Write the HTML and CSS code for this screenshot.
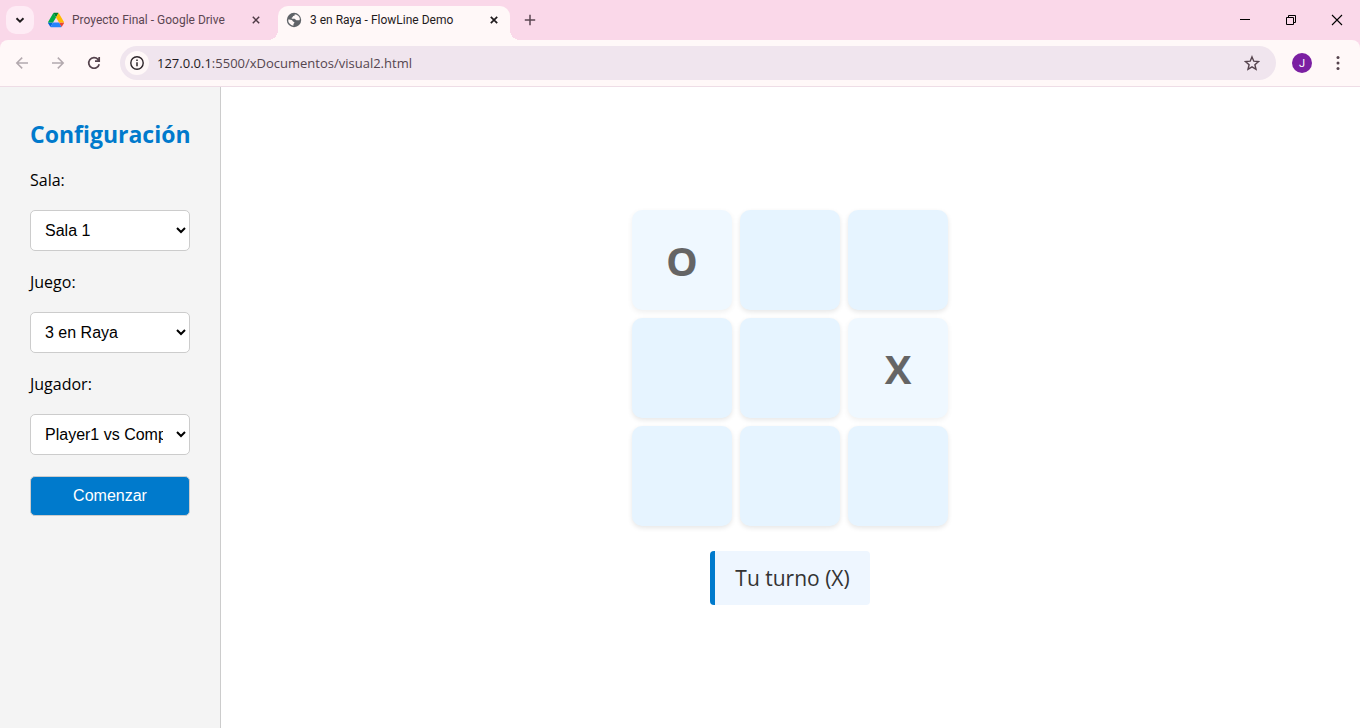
FILE: index.html
```html
<!DOCTYPE html>
<html lang="es">
<head>
<meta charset="utf-8">
<title>3 en Raya - FlowLine Demo</title>
<link rel="stylesheet" href="styles.css">
</head>
<body>
<header class="browser">
  <div class="tabstrip">
    <button class="tab-search" aria-label="Buscar pestañas"><svg width="10" height="10" viewBox="0 0 10 10"><path d="M1.500 3.200 5 6.600l3.500-3.400" fill="none" stroke="#1f1b1d" stroke-width="1.900"/></svg></button>
    <div class="tab">
      <svg width="16" height="16" viewBox="0 0 87 78"><path fill="#0066da" d="m6.600 66.850 3.850 6.650c.8 1.400 1.950 2.500 3.300 3.300l13.750-23.800H0c0 1.550.4 3.100 1.200 4.500z"/><path fill="#00ac47" d="M43.650 25 29.900 1.200c-1.350.8-2.500 1.900-3.300 3.300L1.200 48.500A9.060 9.060 0 0 0 0 53h27.500z"/><path fill="#ea4335" d="M73.550 76.800c1.350-.8 2.500-1.900 3.300-3.300l1.600-2.750 7.650-13.250c.8-1.400 1.200-2.950 1.200-4.500H59.800l5.850 11.500z"/><path fill="#00832d" d="M43.650 25 57.400 1.200C56.050.4 54.500 0 52.900 0H34.400c-1.600 0-3.150.45-4.500 1.200z"/><path fill="#2684fc" d="M59.800 53H27.500L13.750 76.800c1.350.8 2.900 1.200 4.500 1.200h50.800c1.600 0 3.150-.45 4.500-1.200z"/><path fill="#ffba00" d="m73.400 26.500-12.700-22c-.8-1.400-1.950-2.500-3.300-3.300L43.650 25 59.800 53h27.450c0-1.550-.4-3.100-1.200-4.500z"/></svg>
      <span class="tab-title">Proyecto Final - Google Drive</span>
      <button class="tab-close" aria-label="Cerrar pestaña"><svg width="8" height="8" viewBox="0 0 8 8"><path d="m.8.8 6.400 6.400m0-6.400L.8 7.200" stroke="currentColor" stroke-width="1.500"/></svg></button>
    </div>
    <div class="tab tab-active">
      <svg width="16" height="16" viewBox="0 0 16 16"><circle cx="8" cy="8" r="7.200" fill="#5f6368"/><path fill="#fff8f8" d="M8.600 2.200c.6.900-.1 1.600-1.300 1.800-.6.100-.3 1.200-1.200 1.500-.8.300-.5 1.300.4 1.300h2c1 0 1 1.500 2 1.500h2.900l.5-1.300A6 6 0 0 0 8.600 2.200zM2.200 7.400c1.500.2 4.300 0 4.500 1.700.1.900 1.500.5 1.700 1.500.1.900-1 .9-1 1.800v1.300A5.800 5.800 0 0 1 2.200 7.400z"/></svg>
      <span class="tab-title">3 en Raya - FlowLine Demo</span>
      <button class="tab-close" aria-label="Cerrar pestaña"><svg width="8" height="8" viewBox="0 0 8 8"><path d="m.8.8 6.400 6.400m0-6.400L.8 7.200" stroke="currentColor" stroke-width="1.700"/></svg></button>
    </div>
    <button class="new-tab" aria-label="Nueva pestaña"><svg width="12" height="12" viewBox="0 0 12 12"><path d="M6 .8v10.400M.8 6h10.400" stroke="#5b4652" stroke-width="1.500"/></svg></button>
    <div class="window-controls">
      <button aria-label="Minimizar"><svg width="12" height="12" viewBox="0 0 12 12"><path d="M1 5.500h10" stroke="#000"/></svg></button>
      <button aria-label="Restaurar"><svg width="12" height="12" viewBox="0 0 12 12"><path d="M1.500 3.500h7v7h-7zM3.500 3.500v-2h7v7h-2" fill="none" stroke="#000"/></svg></button>
      <button aria-label="Cerrar"><svg width="12" height="12" viewBox="0 0 12 12"><path d="m1 1 10 10M11 1 1 11" stroke="#000" stroke-width="1.100"/></svg></button>
    </div>
  </div>
  <div class="toolbar">
    <button class="nav muted" aria-label="Atrás"><svg width="16" height="16" viewBox="0 0 16 16"><path d="M14 8H3m5.200-5.400L2.800 8l5.400 5.400" fill="none" stroke="currentColor" stroke-width="1.500"/></svg></button>
    <button class="nav muted" aria-label="Adelante"><svg width="16" height="16" viewBox="0 0 16 16"><path d="M2 8h11M7.800 2.600 13.200 8l-5.400 5.400" fill="none" stroke="currentColor" stroke-width="1.500"/></svg></button>
    <button class="nav" aria-label="Recargar"><svg width="16" height="16" viewBox="0 0 16 16"><path d="M13.200 9.200A5.300 5.300 0 1 1 12 4.400l1.200 1.400M13.200 2v4.200H9" fill="none" stroke="currentColor" stroke-width="1.700"/></svg></button>
    <div class="omnibox">
      <button class="site-info" aria-label="Información del sitio"><svg width="16" height="16" viewBox="0 0 16 16"><circle cx="8" cy="8" r="6.200" fill="none" stroke="#2d2529" stroke-width="1.400"/><path d="M8 7.200v4M8 4.600v1.500" stroke="#2d2529" stroke-width="1.500"/></svg></button>
      <div class="url"><span class="host">127.0.0.1</span>:5500/xDocumentos/visual2.html</div>
      <button class="star" aria-label="Añadir a marcadores"><svg width="16" height="16" viewBox="0 0 16 16"><path d="m8 1.900 1.800 4.300 4.700.4-3.600 3.100 1.100 4.600L8 11.800l-4 2.500 1.100-4.600-3.600-3.100 4.700-.4z" fill="none" stroke="#55434d" stroke-width="1.400"/></svg></button>
    </div>
    <button class="avatar" aria-label="Perfil">J</button>
    <button class="menu" aria-label="Menú"><svg width="4" height="16" viewBox="0 0 4 16"><g fill="#55434d"><circle cx="2" cy="2.500" r="1.500"/><circle cx="2" cy="8" r="1.500"/><circle cx="2" cy="13.500" r="1.500"/></g></svg></button>
  </div>
</header>
<div class="page">
  <aside class="sidebar">
    <h2>Configuración</h2>
    <label for="sala">Sala:</label>
    <select id="sala"><option>Sala 1</option></select>
    <label for="juego">Juego:</label>
    <select id="juego"><option>3 en Raya</option></select>
    <label for="jugador">Jugador:</label>
    <select id="jugador"><option>Player1 vs Computadora</option></select>
    <button class="start">Comenzar</button>
  </aside>
  <main class="game">
    <div class="board">
      <button class="cell taken">O</button><button class="cell" aria-label="Casilla 2"></button><button class="cell" aria-label="Casilla 3"></button>
      <button class="cell" aria-label="Casilla 4"></button><button class="cell" aria-label="Casilla 5"></button><button class="cell taken">X</button>
      <button class="cell" aria-label="Casilla 7"></button><button class="cell" aria-label="Casilla 8"></button><button class="cell" aria-label="Casilla 9"></button>
    </div>
    <div class="status">Tu turno (X)</div>
  </main>
</div>
</body>
</html>
```
FILE: styles.css
```css
* { box-sizing: border-box; }

body {
  margin: 0;
  min-height: 100vh;
  display: flex;
  flex-direction: column;
  font-family: "Open Sans", "Noto Sans", sans-serif;
  font-size: 15px;
  color: #000;
  background: #fff;
}

button { border: 0; padding: 0; background: none; font-family: inherit; }
svg { display: block; flex: none; }

.browser { background: #fad8e9; }

.tabstrip { display: flex; height: 40px; padding: 6px 0 0 6px; }

.tab-search {
  display: grid;
  place-items: center;
  width: 28px;
  height: 28px;
  border-radius: 10px;
  background: #feecf5;
}

.tab {
  display: flex;
  align-items: center;
  gap: 8px;
  width: 230px;
  height: 34px;
  padding: 0 0 6px 14px;
  color: #5b4652;
  font-family: Roboto, "Open Sans", sans-serif;
  font-size: 12px;
  line-height: 16px;
}

.tab-title { flex: 1; white-space: nowrap; }

.tab-close { display: grid; place-items: center; width: 16px; height: 16px; color: #4e3a45; }

.tab-active {
  position: relative;
  width: 232px;
  margin-left: 14px;
  padding: 0 8px 6px;
  border-radius: 10px 10px 0 0;
  background: #fff8f8;
  color: #1f1b1d;
}

.tab-active .tab-close { color: #1f1b1d; }

.tab-active::before,
.tab-active::after {
  content: "";
  position: absolute;
  bottom: 0;
  width: 10px;
  height: 10px;
}

.tab-active::before { right: 100%; background: radial-gradient(circle at 0 0, transparent 10px, #fff8f8 10px); }
.tab-active::after { left: 100%; background: radial-gradient(circle at 100% 0, transparent 10px, #fff8f8 10px); }

.new-tab { display: grid; place-items: center; width: 28px; height: 28px; margin-left: 6px; }

.window-controls { display: flex; margin-left: auto; }
.window-controls button { display: grid; place-items: center; width: 46px; height: 28px; }

.toolbar {
  display: flex;
  align-items: center;
  height: 47px;
  padding: 0 8px 0 4px;
  border-bottom: 1px solid #eedde6;
  border-radius: 8px 8px 0 0;
  background: #fff8f8;
}

.nav { display: grid; place-items: center; width: 36px; height: 34px; color: #55434d; }
.muted { color: #b3a9ae; }

.omnibox {
  flex: 1;
  display: flex;
  align-items: center;
  height: 34px;
  margin-left: 8px;
  padding: 0 16px 0 5px;
  border-radius: 17px;
  background: #f0e5ee;
}

.site-info { display: grid; place-items: center; width: 24px; height: 24px; border-radius: 50%; background: #fff8f8; }

.url { flex: 1; margin-left: 8px; font-size: 13px; line-height: 20px; color: #55464f; }
.host { color: #1f1b1d; }

.avatar {
  width: 20px;
  height: 20px;
  margin-left: 16px;
  border-radius: 50%;
  background: #7b1fa2;
  color: #fff;
  font-family: Roboto, sans-serif;
  font-size: 11px;
}

.menu { display: grid; place-items: center; width: 28px; height: 28px; margin-left: 12px; }

.page { flex: 1; display: flex; }

.sidebar {
  display: flex;
  flex-direction: column;
  width: 221px;
  padding: 31px 30px;
  border-right: 1px solid #ccc;
  background: #f4f4f4;
}

.sidebar h2 { margin: 0 0 20px; font-size: 23px; line-height: 32px; color: #007acc; }
.sidebar label { height: 20px; line-height: 20px; margin-bottom: 20px; font-size: 16px; }

.sidebar select,
.start {
  width: 100%;
  border: 1px solid #ccc;
  border-radius: 5px;
  font-family: "Liberation Sans", Arial, sans-serif;
  font-size: 16px;
}

.sidebar select { height: 41px; margin-bottom: 21px; padding: 10px; background: #fff; color: #000; }
.start { height: 40px; background: #007acc; color: #fff; }

.game {
  flex: 1;
  display: flex;
  flex-direction: column;
  align-items: center;
  justify-content: center;
  gap: 25px;
  padding-right: 1px;
}

.board { display: grid; grid-template-columns: repeat(3, 100px); grid-auto-rows: 100px; gap: 8px; }

.cell {
  border-radius: 10px;
  background: #e6f4ff;
  box-shadow: 0 2px 5px rgba(0, 0, 0, 0.1);
  color: #000;
  font-size: 40px;
  font-weight: 700;
}

.taken { opacity: 0.6; }

.status {
  padding: 12px 20px;
  border-left: 5px solid #007acc;
  border-radius: 4px;
  background: #eef6ff;
  color: #333;
  font-size: 21px;
  line-height: 30px;
}
```
